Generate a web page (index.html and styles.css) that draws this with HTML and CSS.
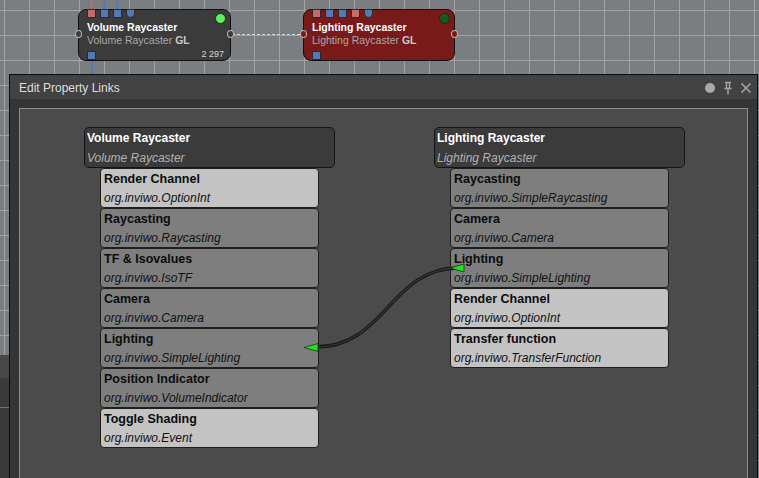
FILE: index.html
```html
<!DOCTYPE html>
<html>
<head>
<meta charset="utf-8">
<link rel="stylesheet" href="styles.css">
</head>
<body>
<div class="screen">
  <svg class="wires" width="759" height="478" viewBox="0 0 759 478">
    <line x1="91.5" y1="0" x2="91.5" y2="10" stroke="#c26c6c" stroke-width="2"/>
    <line x1="104.5" y1="0" x2="104.5" y2="10" stroke="#5479b4" stroke-width="2"/>
    <line x1="117.5" y1="0" x2="117.5" y2="10" stroke="#5479b4" stroke-width="2"/>
    <line x1="92" y1="58" x2="92" y2="75" stroke="#5479b4" stroke-width="2"/>
    <line x1="232" y1="34.5" x2="303" y2="34.5" stroke="#d8d8d8" stroke-width="1.2" stroke-dasharray="3 2"/>
  </svg>

  <div class="node node-vol">
    <div class="ports">
      <span class="port red"></span><span class="port blue"></span><span class="port blue"></span><span class="port blue round"></span>
    </div>
    <div class="node-title">Volume Raycaster</div>
    <div class="node-sub">Volume Raycaster <b>GL</b></div>
    <div class="node-foot"><span class="port blue"></span><span class="count">2 297</span></div>
    <span class="status on"></span>
    <span class="outport out-left"></span><span class="outport out-right"></span>
  </div>

  <div class="node node-light">
    <div class="ports">
      <span class="port red"></span><span class="port blue"></span><span class="port blue"></span><span class="port red"></span><span class="port blue round"></span>
    </div>
    <div class="node-title">Lighting Raycaster</div>
    <div class="node-sub">Lighting Raycaster <b>GL</b></div>
    <div class="node-foot"><span class="port blue"></span></div>
    <span class="status off"></span>
    <span class="outport out-left"></span><span class="outport out-right"></span>
  </div>

  <div class="dock"></div>

  <div class="dialog">
    <div class="titlebar">
      <span class="title">Edit Property Links</span>
      <div class="tb-icons">
        <svg width="12" height="12" viewBox="0 0 12 12"><circle cx="6" cy="6" r="5" fill="#a9a9a9"/></svg>
        <svg width="12" height="14" viewBox="0 0 12 14"><path d="M3 1.5h6M4.5 1.5v6M7.5 1.5v6M2.5 7.5h7M6 7.5v6" stroke="#a6a6a6" stroke-width="1.4" fill="none"/></svg>
        <svg width="12" height="12" viewBox="0 0 12 12"><path d="M1.5 1.5l9 9M10.5 1.5l-9 9" stroke="#a6a6a6" stroke-width="1.5" fill="none"/></svg>
      </div>
    </div>
    <div class="body">
      <div class="panel">
        <div class="proc">
          <div class="proc-head">
            <div class="ph-title">Volume Raycaster</div>
            <div class="ph-sub">Volume Raycaster</div>
          </div>
          <div class="props">
            <div class="prop light"><div class="p-name">Render Channel</div><div class="p-type">org.inviwo.OptionInt</div></div>
            <div class="prop mid"><div class="p-name">Raycasting</div><div class="p-type">org.inviwo.Raycasting</div></div>
            <div class="prop mid"><div class="p-name">TF &amp; Isovalues</div><div class="p-type">org.inviwo.IsoTF</div></div>
            <div class="prop mid"><div class="p-name">Camera</div><div class="p-type">org.inviwo.Camera</div></div>
            <div class="prop mid"><div class="p-name">Lighting</div><div class="p-type">org.inviwo.SimpleLighting</div></div>
            <div class="prop mid"><div class="p-name">Position Indicator</div><div class="p-type">org.inviwo.VolumeIndicator</div></div>
            <div class="prop light"><div class="p-name">Toggle Shading</div><div class="p-type">org.inviwo.Event</div></div>
          </div>
        </div>
        <div class="proc">
          <div class="proc-head">
            <div class="ph-title">Lighting Raycaster</div>
            <div class="ph-sub">Lighting Raycaster</div>
          </div>
          <div class="props">
            <div class="prop mid"><div class="p-name">Raycasting</div><div class="p-type">org.inviwo.SimpleRaycasting</div></div>
            <div class="prop mid"><div class="p-name">Camera</div><div class="p-type">org.inviwo.Camera</div></div>
            <div class="prop mid"><div class="p-name">Lighting</div><div class="p-type">org.inviwo.SimpleLighting</div></div>
            <div class="prop light"><div class="p-name">Render Channel</div><div class="p-type">org.inviwo.OptionInt</div></div>
            <div class="prop light"><div class="p-name">Transfer function</div><div class="p-type">org.inviwo.TransferFunction</div></div>
          </div>
        </div>
      </div>
    </div>
  </div>

  <svg class="link" width="759" height="478" viewBox="0 0 759 478">
    <path d="M316 347 C 385 347, 391 268, 458 268" fill="none" stroke="#161616" stroke-width="3.4"/>
    <path d="M316 347 C 385 347, 391 268, 458 268" fill="none" stroke="#353535" stroke-width="1.4"/>
    <polygon points="304,347.5 318,343.5 318,351.5" fill="#22e022" stroke="#0b3d0b" stroke-width="0.8"/>
    <polygon points="450,268 464,264 464,272" fill="#22e022" stroke="#0b3d0b" stroke-width="0.8"/>
  </svg>
</div>
</body>
</html>
```

FILE: styles.css
```css
* { box-sizing: border-box; }
html, body { margin: 0; padding: 0; }
body {
  width: 759px;
  height: 478px;
  overflow: hidden;
  font-family: "Liberation Sans", Arial, sans-serif;
}
.screen {
  position: relative;
  width: 759px;
  height: 478px;
  overflow: hidden;
  background-color: #7b7e81;
  background-image:
    linear-gradient(to right, #a1a3a5 1px, transparent 1px),
    linear-gradient(to bottom, #a1a3a5 1px, transparent 1px);
  background-size: 25px 25px;
  background-position: 4px 10px;
}
.wires, .link {
  position: absolute;
  left: 0;
  top: 0;
  pointer-events: none;
}
.link { z-index: 5; }

/* network nodes */
.node {
  position: absolute;
  top: 9px;
  width: 153px;
  height: 52px;
  border: 1px solid #111;
  border-radius: 8px;
  display: flex;
  flex-direction: column;
  padding-left: 8px;
  color: #fff;
}
.node-vol { left: 78px; background: #3b3b3b; }
.node-light { left: 303px; width: 152px; background: #781a1a; }
.ports {
  display: flex;
  gap: 4px;
  height: 9px;
  margin-top: -1px;
}
.port {
  display: block;
  width: 9px;
  height: 9px;
  border: 1px solid #2a2a2a;
}
.port.red { background: #c26c6c; }
.port.blue { background: #5479b4; }
.port.round { width: 9px; border-radius: 0 0 5px 5px; }
.node-title {
  margin-top: 3px;
  font-size: 10.5px;
  font-weight: bold;
  line-height: 12px;
}
.node-sub {
  margin-top: 1px;
  font-size: 10.5px;
  line-height: 12px;
  color: #a9a9a9;
}
.node-sub b { color: #c9c9c9; }
.node-foot {
  margin-top: 5px;
  display: flex;
  align-items: flex-start;
  justify-content: space-between;
  padding-right: 6px;
}
.count {
  font-size: 9px;
  line-height: 9px;
  color: #d6d6d6;
  margin-top: -1px;
}
.status {
  position: absolute;
  top: 3px;
  right: 4px;
  width: 11px;
  height: 11px;
  border-radius: 50%;
  border: 1px solid #222;
}
.status.on { background: #5df05d; }
.status.off { background: #1a5a1f; }
.outport {
  position: absolute;
  top: 20px;
  width: 7px;
  height: 8px;
  border: 1.5px solid #b6b6b6;
  border-radius: 50%;
  background: #3b3b3b;
}
.node-light .outport { background: #781a1a; }
.out-left { left: -4px; }
.out-right { right: -4px; }

/* docked strip left of dialog */
.dock {
  position: absolute;
  left: 0;
  top: 355px;
  width: 9px;
  height: 123px;
  background:
    linear-gradient(to bottom, #48484a 0, #48484a 23px, #3a3a3c 23px, #3a3a3c 52px, #747474 52px, #747474 53px, #3a3a3c 53px);
}

/* dialog */
.dialog {
  position: absolute;
  left: 9px;
  top: 74px;
  width: 749px;
  height: 420px;
  border: 1px solid #0c0c0c;
  background: #353535;
  display: flex;
  flex-direction: column;
}
.titlebar {
  height: 24px;
  background: #424242;
  display: flex;
  align-items: center;
  justify-content: space-between;
  padding: 2px 5px 0 9px;
}
.title {
  font-size: 12px;
  color: #dedede;
  line-height: 22px;
}
.tb-icons {
  display: flex;
  align-items: center;
  gap: 6px;
  margin-top: -1px;
}
.body {
  flex: 1;
  padding: 9px 9px 0 9px;
  display: flex;
}
.panel {
  flex: 1;
  border: 1px solid #8c8c8c;
  background: #4b4b4b;
  display: flex;
  gap: 99px;
  padding: 18px 0 0 64px;
  align-items: flex-start;
}
.proc {
  width: 251px;
}
.proc-head {
  height: 41px;
  background: #3b3b3b;
  border: 1px solid #151515;
  border-radius: 5px;
  padding-left: 2px;
}
.ph-title {
  font-size: 12px;
  font-weight: bold;
  line-height: 20px;
  color: #ffffff;
}
.ph-sub {
  font-size: 12px;
  font-style: italic;
  line-height: 20px;
  color: #b2b2b2;
}
.props {
  margin-left: 16px;
  width: 219px;
  display: flex;
  flex-direction: column;
}
.prop {
  height: 40px;
  border: 1px solid #1e1e1e;
  border-radius: 4px;
  padding: 1px 0 0 3px;
  color: #0c0c0c;
}
.prop.light { background: #c3c3c3; }
.prop.mid { background: #7e7e7e; }
.p-name {
  font-size: 12.5px;
  font-weight: bold;
  line-height: 19px;
}
.p-type {
  font-size: 12px;
  font-style: italic;
  line-height: 19px;
  color: #111;
}
```
